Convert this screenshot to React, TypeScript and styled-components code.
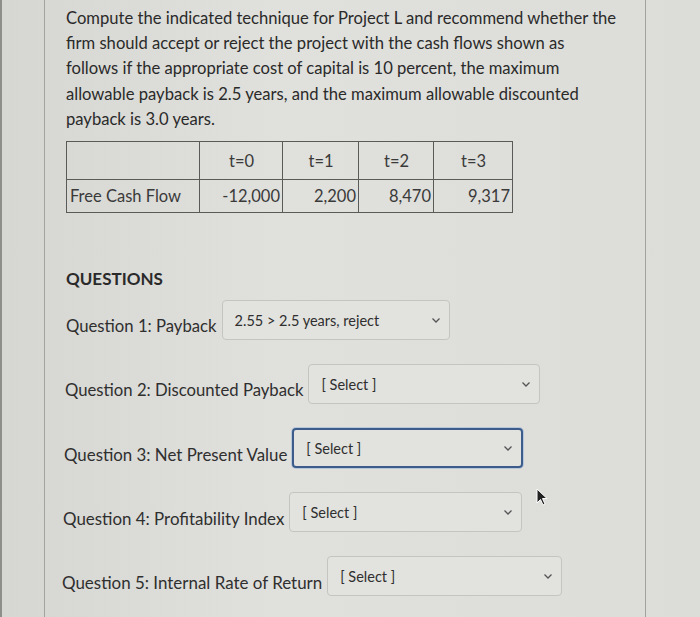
import styled, { createGlobalStyle } from "styled-components";

const Global = createGlobalStyle`
  html, body {
    margin: 0;
    padding: 0;
    background: #dadad6;
  }
  body {
    font-family: Lato, "Open Sans", "Liberation Sans", sans-serif;
    color: #2f2f2f;
  }
`;

const Screen = styled.div`
  width: 700px;
  height: 617px;
  overflow: hidden;
  background: linear-gradient(90deg, #d6d6d2 0%, #e0e0dc 40%, #dcdcd8 100%);
  border-left: 2px solid #8e8e8a;
  box-sizing: border-box;
`;

const Panel = styled.div`
  margin-left: 42px;
  width: 602px;
  height: 617px;
  box-sizing: border-box;
  border-left: 1px solid #a2a29e;
  border-right: 1px solid #a2a29e;
  padding: 6px 0 0 21px;
`;

const Prompt = styled.p`
  margin: 0;
  width: 552px;
  font-size: 16.6px;
  line-height: 25.2px;
  color: #2a2a2a;
`;

const Table = styled.table`
  margin-top: 9px;
  border-collapse: collapse;
  font-size: 16.5px;
  color: #3a3a3a;
`;

const Cell = styled.td<{ $w: number; $align?: string; $h: number }>`
  width: ${(p) => p.$w}px;
  height: ${(p) => p.$h}px;
  border: 1.5px solid #5a5a58;
  padding: 0 2px 0 3px;
  box-sizing: border-box;
  text-align: ${(p) => p.$align || "center"};
  vertical-align: middle;
`;

const Heading = styled.h3`
  margin: 56px 0 0 0;
  font-size: 17px;
  font-weight: 700;
  color: #2a2a2a;
  line-height: 20px;
`;

const Questions = styled.div`
  margin-top: 11px;
  display: flex;
  flex-direction: column;
  gap: 24px;
`;

const Row = styled.div<{ $shift: number }>`
  display: flex;
  align-items: center;
  margin-left: ${(p) => p.$shift}px;
`;

const Label = styled.span<{ $size: number }>`
  font-size: ${(p) => p.$size}px;
  padding-top: 12px;
  color: #2f2f2f;
  white-space: nowrap;
  margin-right: 5px;
`;

const Select = styled.div<{ $w: number; $focus?: boolean }>`
  width: ${(p) => p.$w}px;
  height: 40px;
  box-sizing: border-box;
  border: ${(p) => (p.$focus ? "2px solid #3c5d8c" : "1px solid #c4c4c0")};
  border-radius: 4px;
  background: #e2e2de;
  display: flex;
  align-items: center;
  justify-content: space-between;
  padding: 0 8px 0 12px;
  font-size: 14.5px;
  color: #2f2f2f;
  box-shadow: ${(p) => (p.$focus ? "0 0 0 1px #b9c6da" : "none")};
`;

const Cursor = styled.svg`
  position: absolute;
  left: 536px;
  top: 488px;
`;

const Chevron = () => (
  <svg width="10" height="8" viewBox="0 0 10 8">
    <path d="M1.5 2.5 L5 6 L8.5 2.5" fill="none" stroke="#555" strokeWidth="1.3" />
  </svg>
);

const questions = [
  { label: "Question 1: Payback", value: "2.55 > 2.5 years, reject", w: 228, shift: 0, size: 16.7 },
  { label: "Question 2: Discounted Payback", value: "[ Select ]", w: 232, shift: -1, size: 16.7 },
  { label: "Question 3: Net Present Value", value: "[ Select ]", w: 231, shift: -2, size: 16.85, focus: true },
  { label: "Question 4: Profitability Index", value: "[ Select ]", w: 233, shift: -3, size: 16.9 },
  { label: "Question 5: Internal Rate of Return", value: "[ Select ]", w: 235, shift: -4, size: 16.95 },
];

export default function App() {
  return (
    <>
      <Global />
      <Screen>
        <Panel>
          <Prompt>
            Compute the indicated technique for Project L and recommend whether the firm should
            accept or reject the project with the cash flows shown as follows if the appropriate
            cost of capital is 10 percent, the maximum allowable payback is 2.5 years, and the
            maximum allowable discounted payback is 3.0 years.
          </Prompt>
          <Table>
            <tbody>
              <tr>
                <Cell $w={133} $h={38}></Cell>
                <Cell $w={83} $h={38}>t=0</Cell>
                <Cell $w={76} $h={38}>t=1</Cell>
                <Cell $w={75} $h={38}>t=2</Cell>
                <Cell $w={79} $h={38}>t=3</Cell>
              </tr>
              <tr>
                <Cell $w={133} $h={33} $align="left">Free Cash Flow</Cell>
                <Cell $w={83} $h={33} $align="right">-12,000</Cell>
                <Cell $w={76} $h={33} $align="right">2,200</Cell>
                <Cell $w={75} $h={33} $align="right">8,470</Cell>
                <Cell $w={79} $h={33} $align="right">9,317</Cell>
              </tr>
            </tbody>
          </Table>
          <Heading>QUESTIONS</Heading>
          <Questions>
            {questions.map((q) => (
              <Row key={q.label} $shift={q.shift}>
                <Label $size={q.size}>{q.label}</Label>
                <Select $w={q.w} $focus={q.focus}>
                  <span>{q.value}</span>
                  <Chevron />
                </Select>
              </Row>
            ))}
          </Questions>
        </Panel>
        <Cursor width="14" height="20" viewBox="0 0 14 20">
          <path d="M1 1 L1 15 L4.5 11.5 L7 17 L9 16 L6.5 10.5 L11 10.5 Z" fill="#222" stroke="#fff" strokeWidth="1" />
        </Cursor>
      </Screen>
    </>
  );
}
